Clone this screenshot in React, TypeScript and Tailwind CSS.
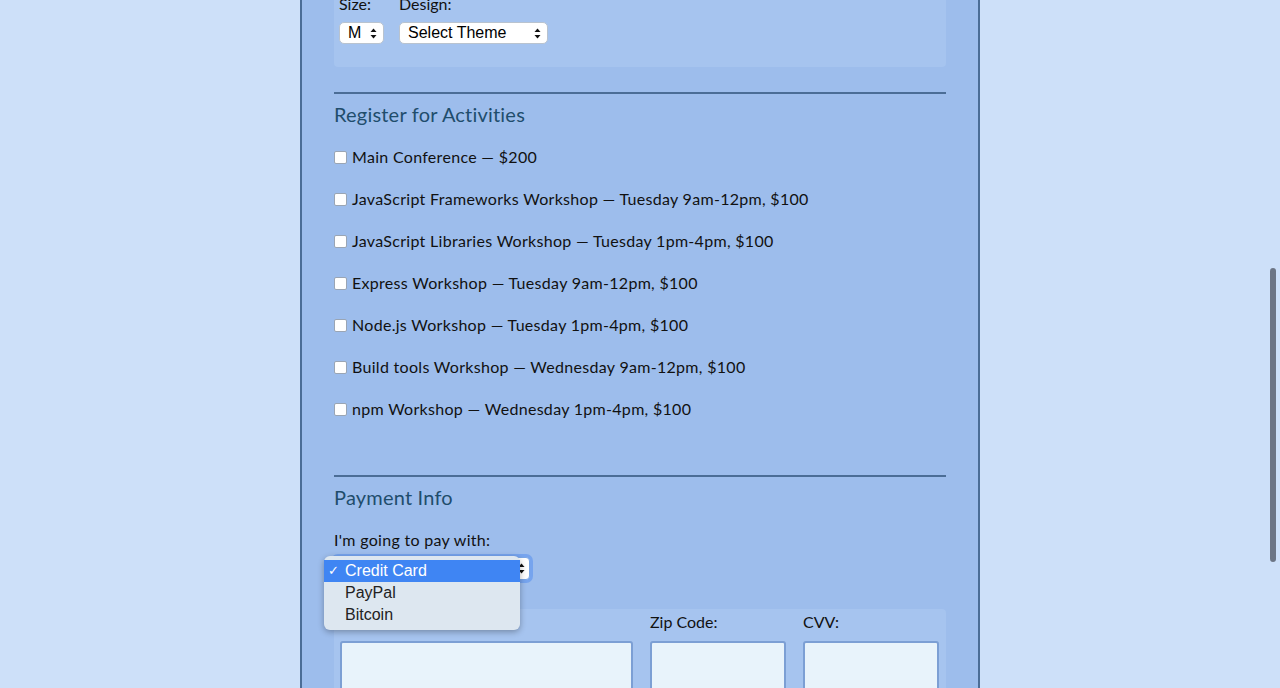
import React from "react";

const activities = [
  "Main Conference — $200",
  "JavaScript Frameworks Workshop — Tuesday 9am-12pm, $100",
  "JavaScript Libraries Workshop — Tuesday 1pm-4pm, $100",
  "Express Workshop — Tuesday 9am-12pm, $100",
  "Node.js Workshop — Tuesday 1pm-4pm, $100",
  "Build tools Workshop — Wednesday 9am-12pm, $100",
  "npm Workshop — Wednesday 1pm-4pm, $100",
];

function Arrows() {
  return (
    <svg width="7" height="11" viewBox="0 0 7 11" className="shrink-0">
      <path d="M3.5 0.5 L6.5 4 H0.5 Z" fill="#111" />
      <path d="M3.5 10.5 L6.5 7 H0.5 Z" fill="#111" />
    </svg>
  );
}

function FakeSelect({ label, w }: { label: string; w: string }) {
  return (
    <div
      className={`${w} h-[22px] flex items-center justify-between pl-[8px] pr-[6px] rounded-[5px] bg-white border border-[#b9c3cf] text-[16px] leading-none text-black`}
      style={{ fontFamily: "'Liberation Sans', Arial, sans-serif" }}
    >
      <span>{label}</span>
      <Arrows />
    </div>
  );
}

export default function App() {
  return (
    <div
      className="relative h-[688px] overflow-hidden bg-[#cde0f9] flex justify-center"
      style={{ fontFamily: "Lato, 'Noto Sans', sans-serif" }}
    >
      <div className="w-[680px] shrink-0 border-x-2 border-[#4b6d96] bg-[#9dbdec] px-[32px] text-[16px] text-[#111] tracking-[0.3px]">
        {/* shirt panel */}
        <div className="-mt-[6px] bg-[#a6c4ef] rounded-[4px] pl-[5px] pb-[23px] tracking-normal">
          <div className="flex gap-[15px]">
            <div className="flex flex-col gap-[8px]">
              <span className="leading-5">Size:</span>
              <FakeSelect label="M" w="w-[45px]" />
            </div>
            <div className="flex flex-col gap-[8px]">
              <span className="leading-5">Design:</span>
              <FakeSelect label="Select Theme" w="w-[149px]" />
            </div>
          </div>
        </div>

        {/* activities */}
        <div className="mt-[25px] border-t-2 border-[#4b6d96]">
          <h2 className="mt-[6px] text-[20px] leading-[28px] text-[#1f4d6c] tracking-[0.2px]">Register for Activities</h2>
          <div className="mt-[19px] flex flex-col gap-[22px]">
            {activities.map((a) => (
              <label key={a} className="flex items-center h-[20px] gap-[5px]">
                <span className="w-[13px] h-[13px] rounded-[2px] bg-white border border-[#9aa5b4]" />
                <span>{a}</span>
              </label>
            ))}
          </div>
        </div>

        {/* payment */}
        <div className="mt-[56px] border-t-2 border-[#4b6d96]">
          <h2 className="mt-[6px] text-[20px] leading-[28px] text-[#1f4d6c] tracking-[0.2px]">Payment Info</h2>
          <p className="mt-[19px] leading-5">I'm going to pay with:</p>
          <div className="mt-[7px] w-[196px] h-[23px] flex items-center justify-end pr-[4px] rounded-[4px] bg-white border border-[#7aa6e6] shadow-[0_0_0_3px_rgba(80,140,240,0.5)]">
            <Arrows />
          </div>

          <div className="mt-[29px] bg-[#a6c4ef] rounded-[4px] px-[6px] pt-[3px] tracking-normal">
            <div className="grid grid-cols-[293px_136px_136px] gap-x-[17px]">
              <span className="leading-5">Card Number:</span>
              <span className="leading-5">Zip Code:</span>
              <span className="leading-5">CVV:</span>
              <div className="mt-[9px] h-[50px] rounded-[3px] border-2 border-[#7c9fd4] bg-[#e8f3fb]" />
              <div className="mt-[9px] h-[50px] rounded-[3px] border-2 border-[#7c9fd4] bg-[#e8f3fb]" />
              <div className="mt-[9px] h-[50px] rounded-[3px] border-2 border-[#7c9fd4] bg-[#e8f3fb]" />
            </div>
          </div>
        </div>
      </div>

      {/* open select menu */}
      <div
        className="absolute left-[324px] top-[556px] w-[196px] h-[74px] rounded-[6px] bg-[#dde7f0] shadow-[0_2px_6px_rgba(0,0,0,0.3)] py-[4px] text-[16px] text-[#222]"
        style={{ fontFamily: "'Liberation Sans', Arial, sans-serif" }}
      >
        <div className="h-[22px] flex items-center bg-[#3f85f3] text-white">
          <span className="w-[21px] pl-[4px] text-[13px]">✓</span>
          <span>Credit Card</span>
        </div>
        <div className="h-[22px] flex items-center pl-[21px]">PayPal</div>
        <div className="h-[22px] flex items-center pl-[21px]">Bitcoin</div>
      </div>

      {/* scrollbar */}
      <div className="absolute left-[1270px] top-[268px] w-[6px] h-[294px] rounded-full bg-[#6c7585]" />
    </div>
  );
}
